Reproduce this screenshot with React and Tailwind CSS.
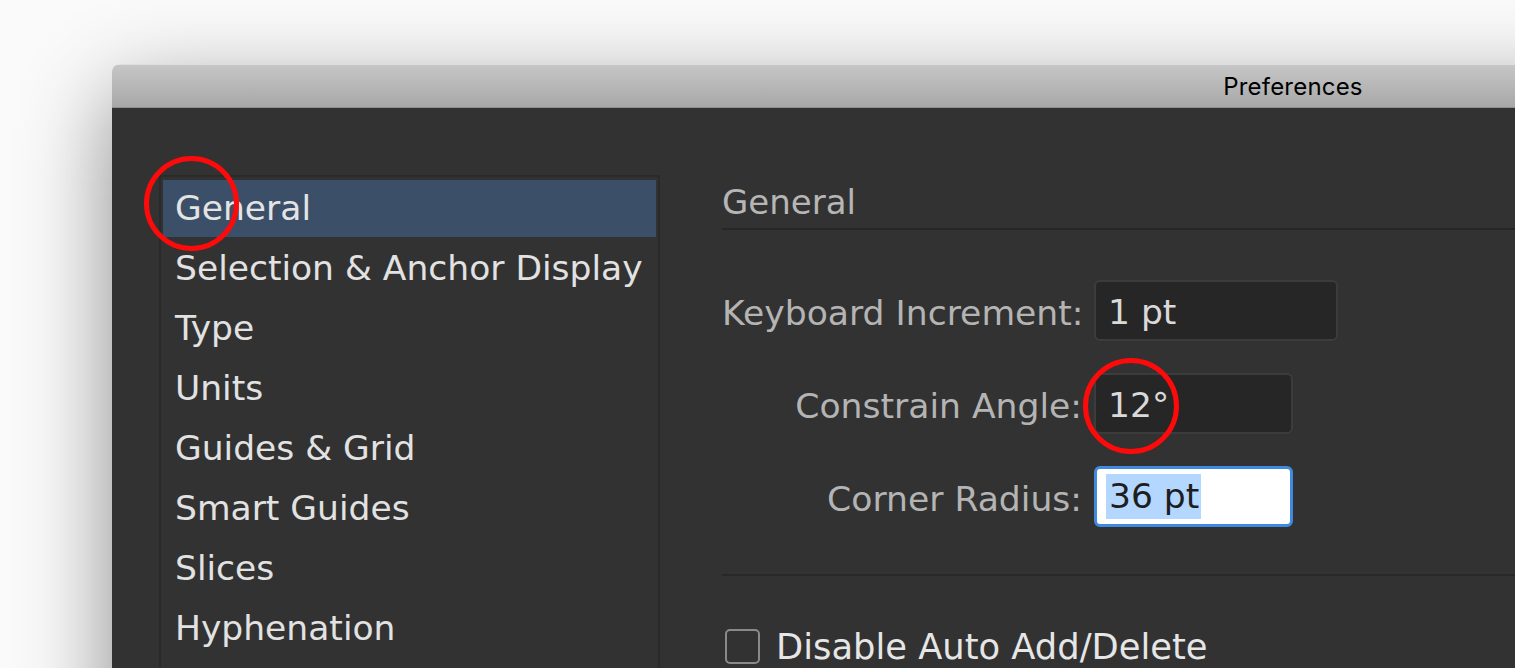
import React from 'react';

const sections = [
  'General',
  'Selection & Anchor Display',
  'Type',
  'Units',
  'Guides & Grid',
  'Smart Guides',
  'Slices',
  'Hyphenation',
];

const font = { fontFamily: '"DejaVu Sans", "Liberation Sans", sans-serif' };

const Field = ({ label, value, width, focused }) => (
  <>
    <div className="text-right text-[#b4b4b4] text-[34.6px] leading-none whitespace-nowrap pt-[5px]">{label}</div>
    {focused ? (
      <div className={`${width} h-[61px] rounded-[6px] border-[3px] border-[#3f8ae0] bg-white flex items-center pl-[9px]`}>
        <span className="bg-[#b3d7ff] text-[#1e1e1e] text-[34.5px] leading-[45px] pl-[3px] pr-[2px]">{value}</span>
      </div>
    ) : (
      <div className={`${width} h-[61px] rounded-[6px] border-2 border-[#3c3c3c] bg-[#262626] flex items-center pl-[12px] pt-[3px] text-[#d9d9d9] text-[34.5px] leading-none`}>
        {value}
      </div>
    )}
  </>
);

export default function App() {
  return (
    <div className="w-[1515px] h-[668px] overflow-hidden relative bg-[#fafafa]" style={font}>
      <div className="pt-[64px] pl-[112px]">
        {/* Window */}
        <div className="w-[2362px] h-[700px] rounded-t-[8px] overflow-hidden shadow-[0_30px_90px_rgba(0,0,0,0.45)] flex flex-col">
          <div className="h-[44px] shrink-0 bg-gradient-to-b from-[#c6c6c6] to-[#a8a8a8] border-t border-[#dedede] border-b border-b-[#8e8e8e] flex items-center justify-center">
            <span className="text-black text-[24px] tracking-[0.2px] mt-[2px]" style={{ fontFamily: 'Inter, "Liberation Sans", sans-serif' }}>
              Preferences
            </span>
          </div>
          <div className="flex-1 bg-[#323232] flex items-start pl-[47px]">
            {/* Sidebar */}
            <div className="mt-[67px] w-[501px] h-[600px] border-2 border-[#2a2a2a] p-[2px] flex flex-col gap-[3px]">
              {sections.map((s, i) => (
                <div
                  key={s}
                  className={`h-[57px] shrink-0 flex items-center pl-[12px] text-[34.5px] leading-none whitespace-nowrap ${
                    i === 0 ? 'bg-[#3b5068] text-[#e4e4e4] mt-[1px]' : 'text-[#e2e2e2]'
                  }`}
                >
                  {s}
                </div>
              ))}
            </div>

            {/* Panel */}
            <div className="ml-[62px] mt-[77px] flex-1">
              <div className="text-[#b6b6b6] text-[34px] leading-none pb-[9px] border-b-2 border-[#262626]">General</div>
              <div className="mt-[50px] grid grid-cols-[360px_auto] gap-x-[12px] gap-y-[32px] items-center justify-start">
                <Field label="Keyboard Increment:" value="1 pt" width="w-[244px]" />
                <Field label="Constrain Angle:" value="12°" width="w-[199px]" />
                <Field label="Corner Radius:" value="36 pt" width="w-[199px]" focused />
              </div>
              <div className="mt-[47px] h-[2px] bg-[#282828]" />
              <div className="mt-[53px] flex items-center gap-[16px] pl-[3px]">
                <div className="w-[35px] h-[35px] rounded-[5px] border-2 border-[#8a8a8a]" />
                <span className="text-[#e6e6e6] text-[35.3px] leading-none">Disable Auto Add/Delete</span>
              </div>
            </div>
          </div>
        </div>
      </div>

      {/* Annotation circles */}
      <div className="absolute left-[144px] top-[156px] w-[95px] h-[95px] rounded-full border-[5px] border-[#ff0a0a]" />
      <div className="absolute left-[1083px] top-[358px] w-[96px] h-[96px] rounded-full border-[5px] border-[#ff0a0a]" />
    </div>
  );
}
